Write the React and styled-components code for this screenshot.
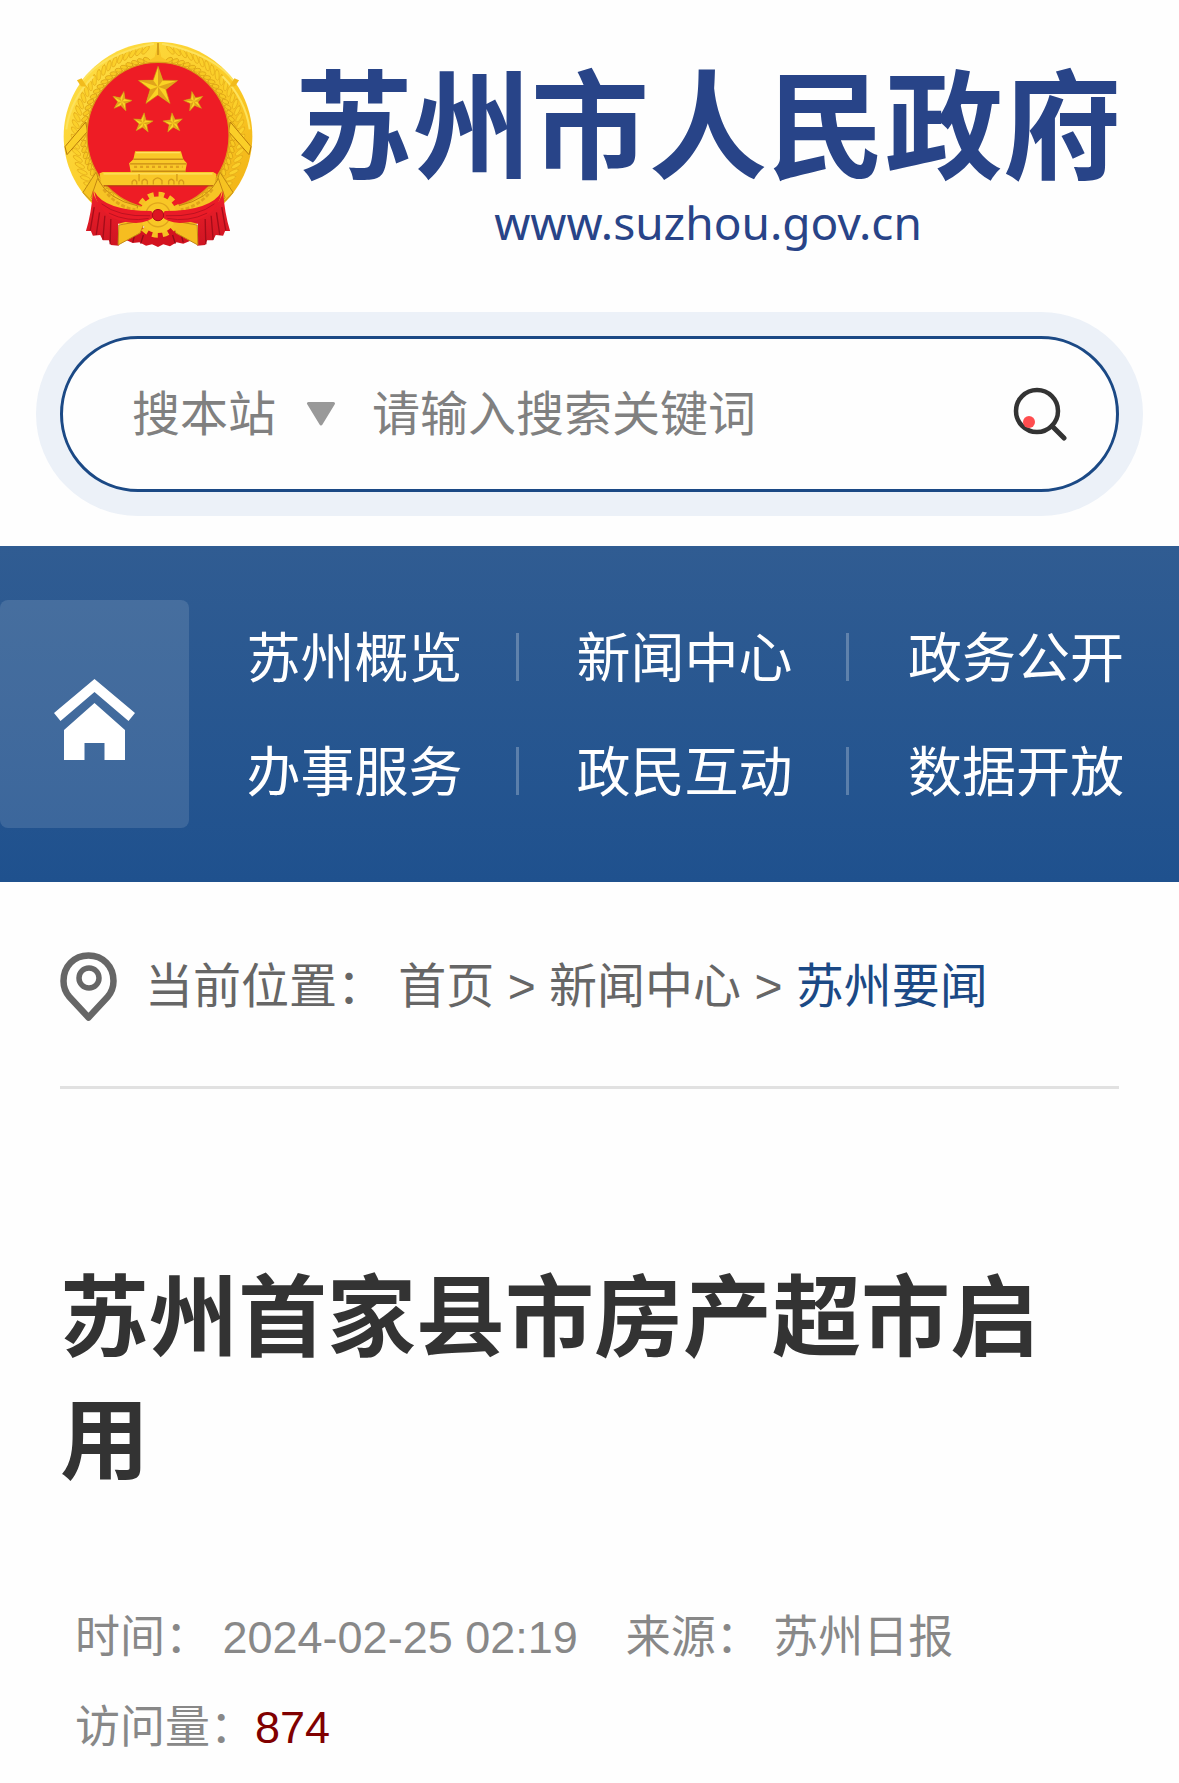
import React from 'react';
import styled, { createGlobalStyle } from 'styled-components';

const COLORS = {
  brand: '#284488',
  navy: '#1b4985',
  halo: '#ecf1f8',
  muted: '#808080',
  text: '#666666',
  heading: '#333333',
  meta: '#888888',
  count: '#800000',
  rule: '#e1e1e1',
};

const navItems = ['苏州概览', '新闻中心', '政务公开', '办事服务', '政民互动', '数据开放'];

const GlobalStyle = createGlobalStyle`
  * {
    box-sizing: border-box;
  }

  body {
    margin: 0;
    background: #fefefe;
    font-family: 'Liberation Sans', 'Noto Sans CJK SC', sans-serif;
  }

  a {
    color: inherit;
    text-decoration: none;
  }
`;

const starPoints = (cx, cy, r, turn = 0) =>
  Array.from({ length: 10 }, (_, i) => {
    const radius = i % 2 ? r * 0.4 : r;
    const angle = ((i * 36 - 90 + turn) * Math.PI) / 180;
    return `${(cx + radius * Math.cos(angle)).toFixed(1)},${(cy + radius * Math.sin(angle)).toFixed(1)}`;
  });

const Star = ({ cx, cy, r, turn }) => {
  const points = starPoints(cx, cy, r, turn);
  return (
    <g>
      <polygon points={points.join(' ')} fill="#fbd324" stroke="#c98a12" strokeWidth="2" />
      {points.map((point, i) =>
        i % 2 ? null : (
          <polygon key={point} points={`${cx},${cy} ${point} ${points[(i + 1) % 10]}`} fill="#e0a41b" />
        )
      )}
    </g>
  );
};

// grain ears running up both sides of the wreath
const grains = Array.from({ length: 30 }, (_, i) => {
  const angle = 128 + i * 4.6;
  const rad = (angle * Math.PI) / 180;
  return { angle, x: 324 + 250 * Math.cos(rad), y: 320 + 262 * Math.sin(rad), ix: 324 + 226 * Math.cos(rad), iy: 318 + 230 * Math.sin(rad) };
});

const Wreath = () => (
  <g>
    {grains.map((g) => (
      <g key={g.angle} fill="none" strokeLinecap="round">
        <ellipse cx={g.x} cy={g.y} rx="16" ry="6" transform={`rotate(${g.angle + 48} ${g.x} ${g.y})`} stroke="#e3aa1a" strokeWidth="2" fill="#fbd02a" />
        <ellipse cx={g.ix} cy={g.iy} rx="11" ry="6" transform={`rotate(${g.angle + 125} ${g.ix} ${g.iy})`} stroke="#d69b14" strokeWidth="2" fill="#f8c922" />
      </g>
    ))}
    <path d="M92 160 Q150 75 312 42 M48 300 Q60 210 130 140" fill="none" stroke="#fde25c" strokeWidth="6" />
    <path d="M44 352 L106 278 L112 306 L50 376Z" fill="#fbcf28" stroke="#b87a0c" strokeWidth="3" />
    <path d="M80 152 L94 146 L110 172 L92 170Z" fill="#f2bb1d" />
    <path d="M138 428 L148 462 L124 516 L98 490Z" fill="#f6c321" stroke="#c08a12" strokeWidth="3" />
  </g>
);

const Emblem = () => (
  <svg width="190" height="206" viewBox="38 37 572 620" role="img" aria-label="国徽">
    <defs>
      <linearGradient id="gold" x1="0" y1="0" x2="1" y2="1">
        <stop offset="0" stopColor="#fee14a" />
        <stop offset="0.55" stopColor="#fbcb26" />
        <stop offset="1" stopColor="#efad13" />
      </linearGradient>
      <linearGradient id="drape" x1="0" y1="0" x2="0" y2="1">
        <stop offset="0" stopColor="#f0202b" />
        <stop offset="1" stopColor="#cf1522" />
      </linearGradient>
    </defs>
    <path d="M324 37 C480 37 608 165 608 321 C608 405 572 480 510 535 L440 585 H208 L138 535 C76 480 40 405 40 321 C40 165 168 37 324 37Z" fill="url(#gold)" />
    <Wreath />
    <g transform="matrix(-1 0 0 1 648 0)">
      <Wreath />
    </g>
    <path d="M324 40 L334 82 L366 102 H282 L314 82Z" fill="#f8c527" />
    <path d="M324 40 V76" stroke="#c48a10" strokeWidth="4" />
    <ellipse cx="324" cy="318" rx="214" ry="220" fill="#ee1c25" stroke="#dd9c18" strokeWidth="4" />
    <Star cx={324} cy={172} r={62} />
    <Star cx={215} cy={216} r={31} turn={12} />
    <Star cx={432} cy={216} r={31} turn={-12} />
    <Star cx={279} cy={281} r={31} turn={6} />
    <Star cx={369} cy={281} r={31} turn={-6} />
    <path d="M255 366 H393 L400 390 L411 402 L406 428 H490 L500 434 L494 469 H154 L148 432 L158 428 H242 L237 402 L250 390Z" fill="#f9c828" />
    <path d="M250 390 H400 M240 404 H410 M244 426 H406" stroke="#c98a14" strokeWidth="4" />
    <path d="M252 413 H398" stroke="#dfa01c" strokeWidth="7" strokeDasharray="9 9" />
    <path d="M258 370 H390 M160 434 H488" stroke="#fde262" strokeWidth="4" />
    <path d="M246 466 V458 Q253 446 260 458 V466 M276 466 V456 Q284 444 292 456 V466 M310 466 V454 Q323 438 336 454 V466 M356 466 V456 Q364 444 372 456 V466 M387 466 V458 Q394 446 401 458 V466 M267 434 V456 M381 434 V456" fill="none" stroke="#d69a1a" strokeWidth="4" />
    <path d="M160 470 H490" stroke="#a9400f" strokeWidth="3" />
    <path d="M142 448 Q174 512 262 530 L260 556 Q168 554 122 506Z M506 448 Q474 512 386 530 L388 556 Q480 554 526 506Z" fill="#f7c425" stroke="#c48712" strokeWidth="3" />
    <path d="M160 480 Q198 532 256 542 M488 480 Q450 532 392 542" fill="none" stroke="#e0a41b" strokeWidth="8" strokeDasharray="12 6" />
    <path d="M128 484 Q140 552 252 572 L204 584 L206 650 L182 648 L176 634 L158 634 L150 618 L128 620 L122 606 H107 Q124 552 128 484Z M520 484 Q508 552 396 572 L444 584 L442 650 L466 648 L472 634 L490 634 L498 618 L520 620 L526 606 H541 Q524 552 520 484Z" fill="url(#drape)" />
    <path d="M132 534 L120 604 M148 550 L138 618 M164 560 L158 632 M182 570 L180 646 M516 534 L528 604 M500 550 L510 618 M484 560 L490 632 M466 570 L468 646" stroke="#a30d19" strokeWidth="4" />
    <path d="M236 596 H412 L420 636 L400 644 L380 640 L360 652 L340 646 L324 654 L306 646 L288 650 L268 640 L248 642 L226 632Z" fill="#d3121f" />
    <path d="M256 610 L248 640 M280 618 L272 644 M368 618 L376 644 M392 610 L400 640" stroke="#930b16" strokeWidth="4" />
    <path d="M206 588 L286 574 L270 612 L204 648Z M442 588 L362 574 L378 612 L444 648Z" fill="#f6bd20" stroke="#c58812" strokeWidth="3" />
    <circle cx="324" cy="557" r="60" fill="none" stroke="#f6bf22" strokeWidth="18" strokeDasharray="17 14.4" />
    <circle cx="324" cy="557" r="55" fill="#f8c726" />
    <circle cx="324" cy="557" r="36" fill="none" stroke="#dfa51c" strokeWidth="4" />
    <path d="M132 486 Q162 544 304 546 L312 562 Q300 578 258 582 Q146 576 132 486Z M516 486 Q486 544 344 546 L336 562 Q348 578 390 582 Q502 576 516 486Z" fill="#ea1b27" />
    <path d="M154 524 Q204 564 300 560 M176 552 Q232 580 296 568 M494 524 Q444 564 348 560 M472 552 Q416 580 352 568" fill="none" stroke="#bd1220" strokeWidth="3" />
    <circle cx="324" cy="558" r="17" fill="#dd1522" stroke="#a80e18" strokeWidth="3" />
  </svg>
);

const Header = styled.header`
  display: flex;
  align-items: flex-start;
  gap: 40px;
  padding: 42px 56px 60px 63px;
`;

const Brand = styled.a`
  flex: 1;
  display: flex;
  flex-direction: column;
  align-items: center;
  gap: 4px;
  padding-top: 28px;
  color: ${COLORS.brand};
`;

const BrandName = styled.span`
  font-size: 118px;
  font-weight: 700;
  line-height: 118px;
  white-space: nowrap;
`;

const BrandUrl = styled.span`
  font-family: 'Noto Sans', sans-serif;
  font-size: 46px;
  line-height: 60px;
`;

const SearchHalo = styled.div`
  margin: 0 36px 30px;
  padding: 24px;
  border-radius: 102px;
  background: ${COLORS.halo};
`;

const SearchForm = styled.form`
  display: flex;
  align-items: center;
  height: 156px;
  padding: 0 48px 0 69px;
  border: 3px solid ${COLORS.navy};
  border-radius: 78px;
  background: #fefefe;
`;

const ScopeLabel = styled.label`
  display: flex;
  align-items: center;
  gap: 30px;
  margin-right: 36px;
`;

const ScopeSelect = styled.select`
  appearance: none;
  width: 144px;
  height: 72px;
  padding: 0;
  border: 0;
  background: none;
  color: ${COLORS.muted};
  font: inherit;
  font-size: 48px;
`;

const SearchInput = styled.input`
  flex: 1;
  min-width: 0;
  height: 72px;
  padding: 0;
  border: 0;
  outline: 0;
  background: none;
  color: ${COLORS.text};
  font: inherit;
  font-size: 48px;

  &::placeholder {
    color: ${COLORS.muted};
    opacity: 1;
  }
`;

const SearchButton = styled.button`
  display: flex;
  padding: 0;
  border: 0;
  background: none;
  cursor: pointer;
`;

const Nav = styled.nav`
  display: flex;
  padding: 54px 0;
  background: linear-gradient(180deg, #305c92 0%, #1f518e 100%);
  color: #fff;
`;

const HomeLink = styled.a`
  display: flex;
  align-items: center;
  justify-content: center;
  width: 189px;
  padding-top: 10px;
  border-radius: 8px;
  background: rgba(255, 255, 255, 0.12);
`;

const NavGrid = styled.div`
  flex: 1;
  display: grid;
  grid-template-columns: repeat(3, 1fr);
  grid-auto-rows: 114px;
`;

const NavCell = styled.div`
  display: flex;
  align-items: center;
`;

const NavLink = styled.a`
  flex: 1;
  padding: 4px 0 0 4px;
  text-align: center;
  font-size: 54px;
  line-height: 60px;
  white-space: nowrap;
`;

const NavDivider = styled.span`
  width: 3px;
  height: 48px;
  background: rgba(255, 255, 255, 0.25);
`;

const Main = styled.main`
  padding: 0 60px;
`;

const Breadcrumb = styled.nav`
  display: flex;
  align-items: center;
  gap: 28px;
  height: 207px;
  padding-top: 6px;
  border-bottom: 3px solid ${COLORS.rule};
  color: ${COLORS.text};
  font-size: 48px;
  line-height: 60px;
  white-space: pre;
`;

const CurrentCrumb = styled.a`
  color: ${COLORS.navy};
`;

const Title = styled.h1`
  margin: 168px 0 90px;
  color: ${COLORS.heading};
  font-size: 89px;
  font-weight: 700;
  line-height: 123px;
`;

const Meta = styled.div`
  display: flex;
  flex-wrap: wrap;
  column-gap: 48px;
  padding: 0 15px;
  color: ${COLORS.meta};
  font-size: 45px;
  line-height: 90px;
`;

const MetaItem = styled.span`
  white-space: pre;
`;

const Count = styled.span`
  color: ${COLORS.count};
`;

const App = () => (
  <>
    <GlobalStyle />
    <Header>
      <Emblem />
      <Brand href="#">
        <BrandName>苏州市人民政府</BrandName>
        <BrandUrl>www.suzhou.gov.cn</BrandUrl>
      </Brand>
    </Header>

    <SearchHalo>
      <SearchForm role="search" onSubmit={(e) => e.preventDefault()}>
        <ScopeLabel>
          <ScopeSelect aria-label="搜索范围">
            <option>搜本站</option>
          </ScopeSelect>
          <svg width="30" height="24" viewBox="0 0 30 24" aria-hidden="true">
            <path d="M2.500 1.500H27.500L15 22Z" fill="#999" stroke="#999" strokeWidth="3" strokeLinejoin="round" />
          </svg>
        </ScopeLabel>
        <SearchInput type="text" aria-label="搜索关键词" placeholder="请输入搜索关键词" />
        <SearchButton type="submit" aria-label="搜索">
          <svg width="56" height="54" viewBox="0 0 56 54" fill="none">
            <circle cx="25" cy="24" r="21" stroke="#333" strokeWidth="4.500" />
            <path d="M40 39L52 51" stroke="#333" strokeWidth="5" strokeLinecap="round" />
            <circle cx="17" cy="35" r="6" fill="#ff4d4f" />
          </svg>
        </SearchButton>
      </SearchForm>
    </SearchHalo>

    <Nav>
      <HomeLink href="#" aria-label="首页">
        <svg width="81" height="81" viewBox="0 0 81 81" fill="#fff">
          <path d="M40.500 0L81 34L74.500 42L40.500 13L6.500 42L0 34Z" />
          <path d="M40.500 24L71 51V81H50.500V64H30.500V81H10V51Z" />
        </svg>
      </HomeLink>
      <NavGrid>
        {navItems.map((item, i) => (
          <NavCell key={item}>
            <NavLink href="#">{item}</NavLink>
            {i % 3 < 2 && <NavDivider />}
          </NavCell>
        ))}
      </NavGrid>
    </Nav>

    <Main>
      <Breadcrumb aria-label="当前位置">
        <svg width="57" height="70" viewBox="0 0 57 70" fill="none" stroke="#666">
          <path d="M28.500 3.500C14 3.500 3.500 14.500 3.500 29C3.500 36 6 41 9.500 45L28.500 65.500L47.500 45C51 41 53.500 36 53.500 29C53.500 14.500 43 3.500 28.500 3.500Z" strokeWidth="6.500" strokeLinejoin="round" />
          <circle cx="29" cy="26" r="10" strokeWidth="5.500" />
        </svg>
        <span>
          当前位置： <a href="#">首页</a> &gt; <a href="#">新闻中心</a> &gt; <CurrentCrumb href="#">苏州要闻</CurrentCrumb>
        </span>
      </Breadcrumb>

      <Title>苏州首家县市房产超市启用</Title>

      <Meta>
        <MetaItem>时间： 2024-02-25 02:19</MetaItem>
        <MetaItem>来源： 苏州日报</MetaItem>
        <MetaItem>
          访问量：<Count>874</Count>
        </MetaItem>
      </Meta>
    </Main>
  </>
);

export default App;
